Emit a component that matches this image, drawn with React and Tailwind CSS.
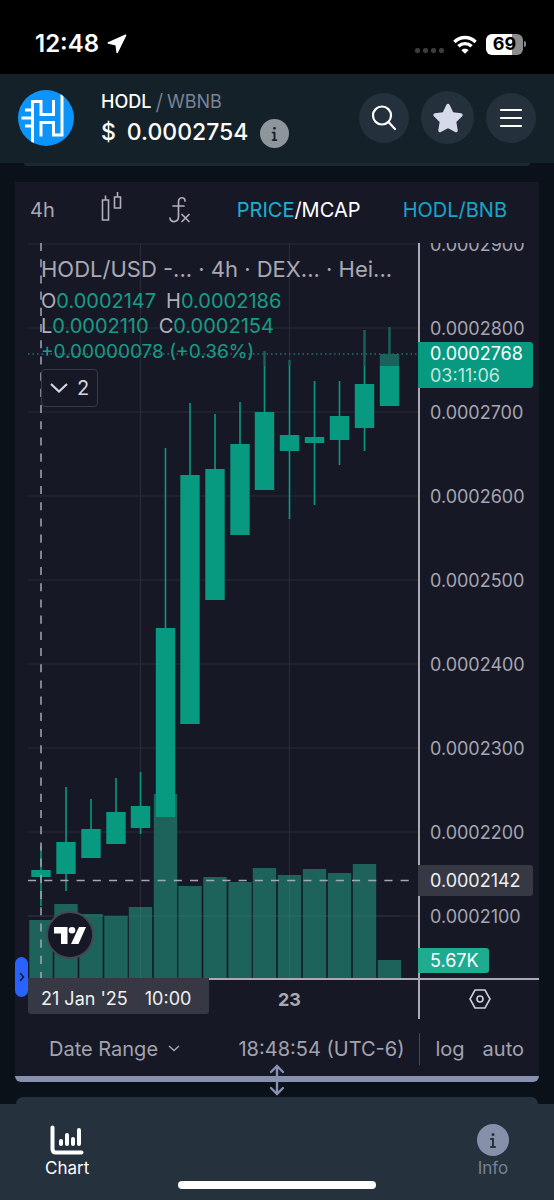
import React from "react";
import { FaStar, FaInfo } from "react-icons/fa6";

const PLOT = { left: 28, top: 243, width: 390, height: 735 };

// x centre, body top, body bottom, wick top, wick bottom, volume top
const CANDLES = [
  [41, 870, 877, 846, 906, 920],
  [66, 842, 874, 787, 891, 904],
  [91, 829, 858, 799, 858, 914],
  [116, 812, 844, 778, 844, 916],
  [140.5, 806, 828, 772, 834, 907],
  [165.5, 628, 817, 448, 817, 794],
  [190, 475, 724, 403, 724, 886],
  [215, 469, 600, 414, 600, 877],
  [240, 444, 535, 402, 535, 882],
  [264.5, 412, 490, 351, 490, 868],
  [289.5, 435, 451, 360, 519, 875],
  [314.5, 437, 443, 381, 505, 869],
  [339.5, 416, 440, 381, 465, 873],
  [364.5, 384, 428, 330, 451, 864],
  [389.5, 366, 406, 327, 406, 960],
];
const GRID_Y = [244, 328, 412, 496, 580, 664, 748, 832, 916];
const GRID_X = [140.5, 289.5];
const PRICES = [
  "0.0002900",
  "0.0002800",
  "0.0002700",
  "0.0002600",
  "0.0002500",
  "0.0002400",
  "0.0002300",
  "0.0002200",
  "0.0002100",
];

function StatusBar() {
  return (
    <div className="flex h-[74px] items-center justify-between bg-black pl-[35px] pr-[28px] pt-[14px]">
      <div className="flex items-center gap-[8px]">
        <span className="text-[24px] font-semibold leading-7">12:48</span>
        <svg viewBox="0 0 20 20" className="size-[20px]" fill="white" stroke="white" strokeWidth="1.6" strokeLinejoin="round">
          <path d="M18.600 1.200 1.300 8.900 9.200 10.600 10.200 18.500Z" />
        </svg>
      </div>
      <div className="flex items-center gap-[9px]">
        <div className="flex gap-[3px] pt-[12px]">
          {[0, 1, 2, 3].map((i) => (
            <span key={i} className="size-[5px] rounded-[2px] bg-[#3d3d3d]" />
          ))}
        </div>
        <svg viewBox="0 0 24 19" className="h-[19px] w-[24px]" fill="none" stroke="white" strokeWidth="3.4">
          <path d="M1.4 7C7.4 1 16.6 1 22.6 7" />
          <path d="M5.4 11.3c3.8-3.6 9.4-3.6 13.2 0" />
          <path d="M12 18.8 8.4 15.2c2-1.9 5.2-1.9 7.2 0z" fill="white" stroke="none" />
        </svg>
        <div className="flex items-center gap-[1px]">
          <div className="flex h-[21px] w-[37px] items-center justify-center rounded-[6px] bg-[linear-gradient(90deg,white_69%,#8c8c8c_69%)] text-[18px] font-bold leading-none text-black">
            69
          </div>
          <span className="h-[6px] w-[2px] rounded-r bg-[#8c8c8c]" />
        </div>
      </div>
    </div>
  );
}

function TokenLogo() {
  return (
    <svg viewBox="0 0 56 56" className="size-[56px] shrink-0" aria-label="HODL">
      <defs>
        <clipPath id="disc">
          <circle cx="28" cy="28" r="28" />
        </clipPath>
      </defs>
      <circle cx="28" cy="28" r="28" fill="#0d94fb" />
      <g clipPath="url(#disc)" fill="none" stroke="white" strokeWidth="3">
        <path d="M14.500 56V11.500H23V24.500H35.500V10" />
        <path d="M7 20H14M3.500 28H14M7 36H14" />
        <path d="M23 46.500V32.500H35.500V45H44V3" />
      </g>
    </svg>
  );
}

function Header() {
  return (
    <header className="flex h-[89px] items-center bg-[#152128] px-[18px] pb-[2px]">
      <TokenLogo />
      <div className="ml-[27px] flex flex-1 flex-col">
        <div className="flex items-center gap-[4px] text-[18px] leading-7">
          <span className="font-medium text-white">HODL</span>
          <span className="text-[22px] font-light leading-7 text-[#7d8798]">/</span>
          <span className="text-[#79839a]">WBNB</span>
        </div>
        <div className="flex items-center gap-[12px] leading-8">
          <span className="flex gap-[11px] text-[23px] font-medium text-white">
            <span>$</span>
            <span>0.0002754</span>
          </span>
          <button aria-label="Price details" className="mt-[3px] grid size-[29px] place-items-center rounded-full bg-[#8e969b] text-[#152128]">
            <FaInfo className="size-[15px]" />
          </button>
        </div>
      </div>
      <div className="flex items-center gap-[12px]">
        <button aria-label="Search" className="grid size-[50px] place-items-center rounded-full bg-[#24303b]">
          <svg viewBox="0 0 26 26" className="size-[26px]" fill="none" stroke="white" strokeWidth="2.200" strokeLinecap="round">
            <circle cx="11" cy="10.500" r="9" />
            <path d="M17.500 17 24 24" />
          </svg>
        </button>
        <button aria-label="Favorite" className="grid size-[53px] place-items-center rounded-full bg-[#24303b] text-[#d6d9ea]">
          <FaStar className="size-[32px]" />
        </button>
        <button aria-label="Menu" className="grid size-[50px] place-items-center rounded-full bg-[#24303b]">
          <svg viewBox="0 0 24 20" className="h-[20px] w-[24px]" stroke="white" strokeWidth="2.200" strokeLinecap="round">
            <path d="M2 2H22M2 10H22M2 18H22" />
          </svg>
        </button>
      </div>
    </header>
  );
}

function Toolbar() {
  return (
    <div className="flex h-[61px] items-center pb-[6px] pl-[15px] pr-[32px] text-[20px] text-[#a9a9b4]">
      <button>4h</button>
      <button aria-label="Candle style" className="-mt-[7px] ml-[45px]">
        <svg viewBox="0 0 24 30" className="h-[30px] w-[24px]" fill="none" stroke="#b0b0ba" strokeWidth="1.600">
          <path d="M2.500 9H8.500V29H2.500ZM5.500 4.500V9M14.500 6H20.500V17H14.500ZM17.500 1V6" />
        </svg>
      </button>
      <button aria-label="Indicators" className="ml-[44px]">
        <svg viewBox="0 0 24 30" className="h-[30px] w-[24px]" fill="none" stroke="#b0b0ba" strokeWidth="1.700" strokeLinecap="round">
          <path d="M17 6C17 1.500 10.500 1.500 10.500 7V21.500C10.500 28 2 28 2 23M5 11H16M14 19.500 21 26.500M21 19.500 14 26.500" />
        </svg>
      </button>
      <button className="ml-[45px] text-[#19b0d2]">
        PRICE<span className="text-white">/MCAP</span>
      </button>
      <button className="ml-auto text-[#16a6c6]">HODL/BNB</button>
    </div>
  );
}

function Plot() {
  const { left, top, width, height } = PLOT;
  return (
    <svg
      viewBox={`${left} ${top} ${width} ${height}`}
      preserveAspectRatio="none"
      className="block h-[735px] w-full"
      role="img"
      aria-label="Price and volume chart"
    >
      <g stroke="#292b36" strokeWidth="1.200">
        {GRID_Y.map((y) => (
          <path key={y} d={`M28 ${y}H418`} />
        ))}
        {GRID_X.map((x) => (
          <path key={x} d={`M${x} 243V978`} />
        ))}
      </g>
      <g fill="#1d635c">
        {CANDLES.map(([x, , , , , v]) => (
          <rect key={x} x={x - 11.7} y={v} width="23.400" height={978 - v} />
        ))}
      </g>
      <g stroke="#fff" strokeOpacity=".06">
        <path d="M28 916H400M289.500 875V978M140.500 907V978" />
      </g>
      <path d="M28 354H418" stroke="#16776d" strokeWidth="1.400" strokeDasharray="1.500 3" />
      {CANDLES.map(([x, t, b, wt, wb]) => (
        <g key={x} fill="#089981">
          <rect x={x - 0.8} y={wt} width="1.600" height={wb - wt} />
          {wt < 366 && <rect x={x - 0.9} y={wt} width="1.800" height={366 - wt} fill="#1a625b" />}
          <rect x={x - 9.7} y={t} width="19.400" height={b - t} />
        </g>
      ))}
      <rect x="379.800" y="354" width="19.400" height="12" fill="#1a625b" />
      <g stroke="#a5a8b3" strokeWidth="1.500" strokeDasharray="8.100 8.100">
        <path d="M41 243V978" />
        <path d="M28 880.500H410" />
      </g>
    </svg>
  );
}

function Legend() {
  const rows = [
    [["O", "0.0002147"], ["H", "0.0002186"]],
    [["L", "0.0002110"], ["C", "0.0002154"]],
  ];
  return (
    <div className="absolute left-[13px] top-[12px] text-[20px] leading-[25px]">
      <div className="mb-[6px] whitespace-nowrap text-[22px] leading-7 text-[#aaa8b4]">
        HODL/USD -... · 4h · DEX... · Hei...
      </div>
      {rows.map((row) => (
        <div key={row[0][0]} className="flex gap-[10px]">
          {row.map(([k, v]) => (
            <span key={k} className="text-[#189c86]">
              <span className="text-[#b0b0ba]">{k}</span>
              {v}
            </span>
          ))}
        </div>
      ))}
      <div className="text-[19px] leading-[25px] text-[#189c86]">+0.00000078 (+0.36%)</div>
      <button className="mt-[5px] flex h-[38px] w-[57px] items-center justify-center gap-[9px] rounded-[4px] border border-[#3a3a47] bg-[#171826] text-[20px] text-[#d5d7de]">
        <svg viewBox="0 0 18 10" className="h-[10px] w-[18px]" fill="none" stroke="currentColor" strokeWidth="2.200">
          <path d="M1 1 9 8.500 17 1" />
        </svg>
        2
      </button>
    </div>
  );
}

function PriceAxis() {
  return (
    <div className="relative h-[735px] w-[121px] shrink-0 border-l-2 border-[#a9aab3] text-[18px]">
      <div className="h-full overflow-hidden text-[#a5a5b0]">
        <div className="-mt-[41px] flex flex-col pl-[10px]">
          {PRICES.map((p) => (
            <span key={p} className="flex h-[84px] items-center">
              {p}
            </span>
          ))}
        </div>
      </div>
      <div className="absolute -left-[2px] top-[99px] w-[115px] rounded-r-[3px] bg-[#089981] py-[1px] pl-[12px] leading-[22px] text-white">
        <div>0.0002768</div>
        <div className="leading-[22px] text-[#bfe6df]">03:11:06</div>
      </div>
      <div className="absolute -left-[2px] top-[622px] w-[115px] rounded-r-[3px] bg-[#363843] pl-[12px] leading-[31px] text-[#f0f0f3]">
        0.0002142
      </div>
      <div className="absolute -left-[2px] top-[705px] w-[71px] rounded-r-[3px] bg-[#1fab90] pl-[12px] leading-[25px] text-white">
        5.67K
      </div>
    </div>
  );
}

function TimeAxis() {
  return (
    <div className="ml-[13px] flex h-[41px] border-t-2 border-[#a9aab3] text-[18px]">
      <div className="flex flex-1 items-center">
        <div className="-mt-[2px] flex h-[36px] w-[181px] items-center gap-[17px] self-start rounded-b-[3px] bg-[#363843] pl-[13px] pt-[4px] text-[#f0f0f3]">
          <span>21 Jan '25</span>
          <span>10:00</span>
        </div>
        <span className="ml-[69px] text-[18px] font-bold text-[#a9a9b4]">23</span>
      </div>
      <div className="flex w-[121px] items-center justify-center border-l-2 border-[#a9aab3] pb-[2px]">
        <button aria-label="Scale settings">
          <svg viewBox="0 0 22 20" className="h-[20px] w-[22px]" fill="none" stroke="#d0d0da" strokeWidth="1.600">
            <path d="M6 1H16L21 10 16 19H6L1 10Z" />
            <circle cx="11" cy="10" r="3" />
          </svg>
        </button>
      </div>
    </div>
  );
}

function RangeBar() {
  return (
    <div className="flex h-[57px] items-center pl-[34px] pr-[15px] pt-[2px] text-[20px] text-[#a3a3af]">
      <button className="flex items-center gap-[10px]">
        Date Range
        <svg viewBox="0 0 12 7" className="h-[7px] w-[12px]" fill="none" stroke="currentColor" strokeWidth="1.500">
          <path d="M1 1 6 5.500 11 1" />
        </svg>
      </button>
      <button className="ml-auto">18:48:54 (UTC-6)</button>
      <span className="mx-[15px] h-[32px] w-px bg-[#474855]" />
      <button>log</button>
      <button className="ml-[18px]">auto</button>
    </div>
  );
}

function ChartPanel() {
  return (
    <section className="relative mx-[15px] mt-[16px] rounded-b-[6px] border-b-[6px] border-[#8790ad] bg-[#171826]">
      <Toolbar />
      <div className="relative ml-[13px] flex">
        <div className="min-w-0 flex-1">
          <Plot />
        </div>
        <PriceAxis />
        <Legend />
        <div className="absolute left-[18px] top-[668px] grid size-[48px] place-items-center rounded-full border-2 border-[#454652] bg-[#171826]">
          <svg viewBox="0 0 32 17" className="h-[17px] w-[32px]" fill="white">
            <path d="M0 0H13.500V17H7V6.500H0Z" />
            <circle cx="18" cy="3.300" r="3.300" />
            <path d="M25 0H32L24.500 17H17Z" />
          </svg>
        </div>
      </div>
      <TimeAxis />
      <RangeBar />
      <button aria-label="Expand panel" className="absolute left-0 top-[775px] grid h-[40px] w-[13px] place-items-center rounded-full bg-[#2962ff]">
        <svg viewBox="0 0 6 10" className="h-[10px] w-[6px]" fill="none" stroke="#171826" strokeWidth="1.500">
          <path d="M1 1 4.500 5 1 9" />
        </svg>
      </button>
      <button aria-label="Resize chart" className="absolute -bottom-[20px] left-1/2 -translate-x-1/2">
        <svg viewBox="0 0 16 32" className="h-[32px] w-[16px]" fill="none" stroke="#8790ad" strokeWidth="2.400" strokeLinecap="round">
          <path d="M8 2V30M2 8 8 2 14 8M2 24 8 30 14 24" />
        </svg>
      </button>
    </section>
  );
}

function BottomNav() {
  return (
    <footer className="mt-[15px]">
      <div className="mx-[16px] h-[7px] rounded-t-[10px] bg-[#25313c]" />
      <nav className="relative flex h-[96px] items-start justify-between bg-[#25313c] px-[45px] pt-[21px] text-[17px] leading-5">
        <a href="#chart" className="flex flex-col items-center gap-[3px] text-white">
          <svg viewBox="0 0 34 30" className="h-[30px] w-[34px]" fill="none" stroke="currentColor" strokeWidth="4" strokeLinecap="round" strokeLinejoin="round">
            <path d="M2.500 2.500V24Q2.500 27.500 6 27.500H31.500M11 16V19M17 10V19M23 14V19M29 5V19" />
          </svg>
          Chart
        </a>
        <a href="#info" className="-mt-[1px] flex flex-col items-center gap-[2px] text-[#8790ab]">
          <span className="grid size-[32px] place-items-center rounded-full bg-[#8790ab] text-[#25313c]">
            <FaInfo className="size-[16px]" />
          </span>
          <span className="text-[#77829a]">Info</span>
        </a>
        <span className="absolute bottom-[11px] left-1/2 h-[8px] w-[198px] -translate-x-1/2 rounded-full bg-white" />
      </nav>
    </footer>
  );
}

export default function App() {
  return (
    <main className="min-h-screen bg-[#0a1118] font-[Inter,'Liberation_Sans',sans-serif] text-white">
      <StatusBar />
      <Header />
      <div className="mx-[24px] h-[3px] rounded-b-[6px] bg-[#1d272e]" />
      <ChartPanel />
      <BottomNav />
    </main>
  );
}
